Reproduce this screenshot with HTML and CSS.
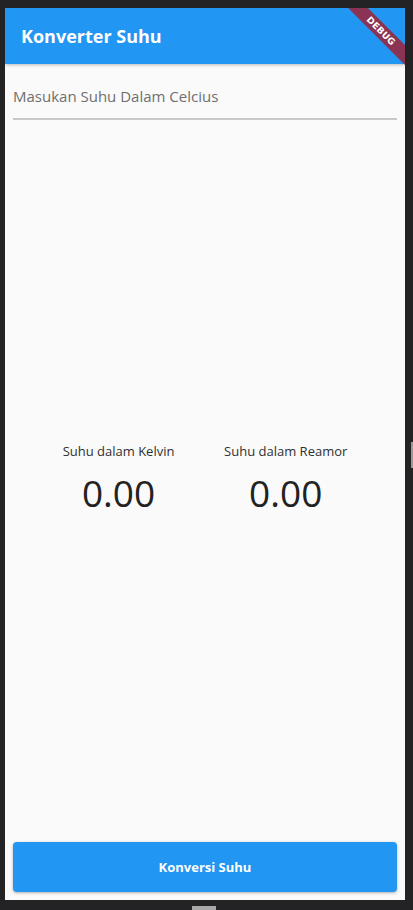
FILE: index.html
```html
<!DOCTYPE html>
<html lang="id">
<head>
<meta charset="utf-8">
<title>Konverter Suhu</title>
<link rel="stylesheet" href="styles.css">
</head>
<body>
<div class="frame">
  <div class="screen">
    <header class="appbar">
      <h1 class="title">Konverter Suhu</h1>
    </header>
    <div class="banner"><span>DEBUG</span></div>
    <main class="content">
      <div class="field">
        <span class="hint">Masukan Suhu Dalam Celcius</span>
      </div>
      <div class="results">
        <div class="result">
          <div class="label">Suhu dalam Kelvin</div>
          <div class="value">0.00</div>
        </div>
        <div class="result">
          <div class="label">Suhu dalam Reamor</div>
          <div class="value">0.00</div>
        </div>
      </div>
      <button class="convert">Konversi Suhu</button>
    </main>
  </div>
  <div class="side-handle"></div>
</div>
<div class="home-bar"></div>
</body>
</html>
```
FILE: styles.css
```css
* { box-sizing: border-box; }
html, body {
  margin: 0;
  padding: 0;
  width: 413px;
  height: 910px;
  background: #232326;
  overflow: hidden;
  font-family: "Open Sans", "Noto Sans", sans-serif;
}
.frame {
  position: relative;
  padding: 8px 8px 0 5px;
  height: 900px;
}
.screen {
  position: relative;
  width: 400px;
  height: 892px;
  background: #fafafa;
  display: flex;
  flex-direction: column;
  overflow: hidden;
}
.appbar {
  height: 56px;
  flex: none;
  background: #2196f3;
  display: flex;
  align-items: center;
  padding: 0 16px;
  box-shadow: 0 1px 3px rgba(0,0,0,0.25);
  position: relative;
  z-index: 1;
}
.title {
  margin: 0;
  color: #fff;
  font-size: 18px;
  font-weight: 700;
  letter-spacing: 0;
}
.banner {
  position: absolute;
  z-index: 2;
  left: 326px;
  top: 16px;
  width: 100px;
  height: 14px;
  background: #8a3352;
  transform: rotate(45deg);
  display: flex;
  align-items: center;
  justify-content: center;
}
.banner span {
  color: #fff;
  font-family: "DejaVu Sans", sans-serif;
  font-weight: 700;
  font-size: 9px;
  letter-spacing: 0.2px;
}
.content {
  flex: 1;
  display: flex;
  flex-direction: column;
  padding: 8px 8px 8px 8px;
}
.field {
  height: 48px;
  border-bottom: 2px solid #c8c8c8;
  display: flex;
  align-items: center;
  padding-top: 1px;
}
.hint {
  color: #6f6f6f;
  font-size: 15px;
}
.results {
  flex: 1;
  display: flex;
  justify-content: space-evenly;
  align-items: center;
  padding-bottom: 4px;
}
.result {
  display: flex;
  flex-direction: column;
  align-items: center;
}
.label {
  color: #303030;
  font-size: 13px;
  line-height: 18px;
}
.value {
  color: #222;
  font-size: 37px;
  line-height: 48px;
  margin-top: 9px;
}
.convert {
  height: 50px;
  border: none;
  border-radius: 4px;
  background: #2196f3;
  color: #fff;
  font-family: inherit;
  font-weight: 700;
  font-size: 13px;
  box-shadow: 0 1px 3px rgba(0,0,0,0.3);
  margin-bottom: 0;
}
.side-handle {
  position: absolute;
  left: 411px;
  top: 442px;
  width: 2px;
  height: 26px;
  background: #9a9a9a;
}
.home-bar {
  width: 24px;
  height: 4px;
  margin: 6px 0 0 192px;
  background: #a8a8a8;
}
```
